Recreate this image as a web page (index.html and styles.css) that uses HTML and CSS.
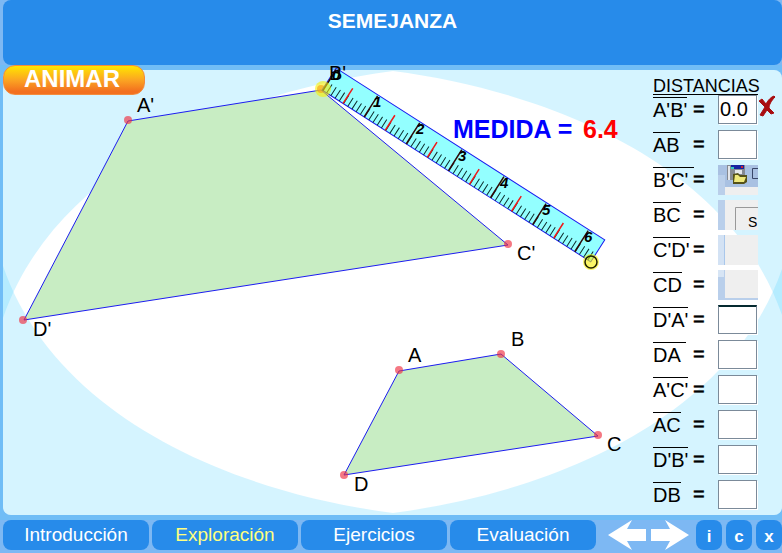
FILE: index.html
```html
<!DOCTYPE html>
<html lang="es">
<head>
<meta charset="utf-8">
<title>Semejanza</title>
<link rel="stylesheet" href="styles.css">
</head>
<body>
<header class="header"><h1>SEMEJANZA</h1></header>
<div class="stage">
<main class="board">
  <svg class="backdrop" viewBox="3 70 779 445" preserveAspectRatio="none" aria-hidden="true">
    <path d="M3 60H782V315C732 170 560 93 393 71C226 93 54 170 3 318Z"/>
    <path d="M3 525H782V269C732 414 560 491 393 513C226 491 54 414 3 266Z"/>
  </svg>
  <svg class="canvas" viewBox="3 70 779 445">
    <g class="shape">
      <path d="M128 121L321 90L508 245L24 320Z"/>
      <path d="M399 371L501 354L598 436L344 475Z"/>
    </g>
    <g class="vertex">
      <circle cx="128" cy="120" r="4"/><circle cx="321" cy="89" r="4"/>
      <circle cx="508" cy="244" r="4"/><circle cx="23" cy="320" r="4"/>
      <circle cx="399" cy="370" r="4"/><circle cx="501" cy="354" r="4"/>
      <circle cx="598" cy="435" r="4"/><circle cx="344" cy="475" r="4"/>
    </g>
    <g transform="translate(322 90) rotate(32.6)">
      <rect class="ruler" x="0" y="-26" width="319" height="26"/>
      <line class="minor" x1="5" y1="-5" x2="318" y2="-5"/>
      <path class="half" d="M25 0V-18M75 0V-18M125 0V-18M175 0V-18M225 0V-18M275 0V-18"/>
      <path class="major" d="M1 0V-25M50 0V-25M100 0V-25M150 0V-25M200 0V-25M250 0V-25M300 0V-25"/>
    </g>
    <g class="names">
      <text x="137" y="112">A'</text><text x="517" y="260">C'</text>
      <text x="33" y="336">D'</text><text x="408" y="362">A</text>
      <text x="511" y="346">B</text><text x="607" y="451">C</text>
      <text x="354" y="491">D</text><text x="329" y="80">B'</text>
    </g>
    <g class="numbers">
      <text x="332" y="80">0</text><text x="373" y="107">1</text>
      <text x="416" y="134">2</text><text x="458" y="161">3</text>
      <text x="500" y="188">4</text><text x="542" y="215">5</text>
      <text x="584" y="242">6</text>
    </g>
    <circle class="grip" cx="323" cy="89" r="8"/>
    <circle class="grip" cx="591" cy="262" r="8"/>
    <circle class="ring" cx="591" cy="262" r="6"/>
    <text class="measure" x="453" y="138">MEDIDA =</text>
    <text class="measure result" x="583" y="138">6.4</text>
  </svg>
  <button class="animate" type="button">ANIMAR</button>
  <form class="distances">
    <h2>DISTANCIAS</h2>
    <div class="row"><label for="d1"><span>A'B'</span></label><b>=</b><input id="d1" value="0.0">
      <svg class="cross" viewBox="0 0 18 22" role="img" aria-label="Incorrecto"><path d="M1 6L4 4L8 9C10 5 13 2 16 1L17 2C13 6 11 10 11 13L16 18L13 19L9 15L5 21L2 20L7 12Z"/></svg></div>
    <div class="row"><label for="d2"><span>AB</span></label><b>=</b><input id="d2"></div>
    <div class="row"><label for="d3"><span>B'C'&nbsp;</span></label><b>=</b><input class="bare" id="d3">
      <svg class="under" viewBox="0 0 40 30" aria-hidden="true">
        <path fill="#a9c1e2" d="M0 0H40V22H0Z"/><path fill="#bacfea" d="M0 10H7V30H0Z"/><path fill="#efefef" d="M7 22H40V30H7Z"/>
        <path fill="#858991" d="M9 0H27V15H9Z"/><path fill="#e4e6ea" d="M10 1H12V15H10ZM17 5H24V9H17Z"/><path fill="#1721a0" d="M13 0H26V4H13Z"/><path fill="#30c8c0" d="M13 2H16V4H13Z"/><path fill="#c23" d="M23 1H25V3H23Z"/>
        <path fill="#555118" d="M15 9L20 8L22 10H29V17L26 19H15Z"/><path fill="#efe87a" d="M17 10H20L22 12H28L26 17H16Z"/>
        <path fill="none" stroke="#394768" d="M40 3.500H34.500V13.500H40"/>
      </svg></div>
    <div class="row"><label for="d4"><span>BC</span></label><b>=</b><input class="bare" id="d4">
      <svg class="under" viewBox="0 0 40 30"><path fill="#efefef" d="M0 0H40V30H0Z"/><path fill="#b9cfeb" d="M0 0H7V30H0Z"/><path fill="none" stroke="#999" d="M17.500 30V7.500H40"/><text x="30" y="27">S</text></svg></div>
    <div class="row"><label for="d5"><span>C'D'</span></label><b>=</b><input class="bare" id="d5">
      <svg class="under" viewBox="0 0 40 30" aria-hidden="true"><path fill="#efefef" d="M0 0H40V30H0Z"/><path fill="#d3e2f4" d="M0 0H6V30H0Z"/><path fill="#a9c7eb" d="M6 0H7V30H6Z"/></svg></div>
    <div class="row"><label for="d6"><span>CD</span></label><b>=</b><input class="bare" id="d6">
      <svg class="under" viewBox="0 0 40 30" aria-hidden="true"><path fill="#efefef" d="M0 0H40V30H0Z"/><path fill="#b9cfeb" d="M0 0H7V28H40V30H0Z"/><path fill="#d7e5f5" d="M0 0H6V7H0Z"/></svg></div>
    <div class="row"><label for="d7"><span>D'A'</span></label><b>=</b><input class="topline" id="d7"></div>
    <div class="row"><label for="d8"><span>DA&nbsp;</span></label><b>=</b><input id="d8"></div>
    <div class="row"><label for="d9"><span>A'C'</span></label><b>=</b><input id="d9"></div>
    <div class="row"><label for="d10"><span>AC</span></label><b>=</b><input id="d10"></div>
    <div class="row"><label for="d11"><span>D'B'</span></label><b>=</b><input id="d11"></div>
    <div class="row"><label for="d12"><span>DB</span></label><b>=</b><input id="d12"></div>
  </form>
</main>
</div>
<nav class="footer">
  <div class="tabs">
    <button type="button">Introducción</button>
    <button type="button" class="current">Exploración</button>
    <button type="button">Ejercicios</button>
    <button type="button">Evaluación</button>
  </div>
  <div class="arrows">
    <button type="button" aria-label="Anterior"><svg viewBox="0 0 38 30"><path d="M0 15L24 0L19 9H38V21H19L24 30Z"/></svg></button>
    <button type="button" aria-label="Siguiente"><svg viewBox="0 0 38 30"><path d="M38 15L14 0L19 9H0V21H19L14 30Z"/></svg></button>
  </div>
  <div class="tools">
    <button type="button">i</button><button type="button">c</button><button type="button">x</button>
  </div>
</nav>
</body>
</html>
```

FILE: styles.css
```css
* { box-sizing: border-box; }

body {
  margin: 0;
  min-height: 100vh;
  display: flex;
  flex-direction: column;
  background: #7db8f3;
  font-family: "Liberation Sans", Arial, sans-serif;
  color: #000;
}

button {
  margin: 0;
  padding: 0;
  border: 0;
  font: inherit;
  cursor: pointer;
}

.header {
  height: 65px;
  margin-left: 3px;
  padding-top: 9px;
  border-radius: 8px;
  background: #278bea;
  text-align: center;
}

h1 {
  margin: 0;
  font-size: 21px;
  line-height: 24px;
  color: #fff;
}

.stage {
  padding: 5px 0 5px 3px;
  background: #70bdf6;
}

.board {
  position: relative;
  display: flex;
  justify-content: flex-end;
  border-radius: 8px;
  background: #fff;
}

.backdrop {
  position: absolute;
  inset: 0;
  width: 100%;
  height: 100%;
  border-radius: 8px;
  fill: #57d4ff;
  fill-opacity: 0.25;
}

.canvas {
  position: absolute;
  inset: 0;
  width: 100%;
  height: 100%;
  overflow: visible;
}

.shape { fill: #c8edc3; stroke: #1c1cf0; }
.vertex { fill: #f03040; fill-opacity: 0.65; }
.names { font-size: 20px; }
.ruler { fill: #80ffff; fill-opacity: 0.85; stroke: #1c1cf0; }
.minor { stroke: #0c2c2c; stroke-width: 10; stroke-dasharray: 1 4; }
.half { stroke: #f01818; stroke-width: 1.5; }
.major { stroke: #300808; stroke-width: 1.5; }
.numbers { font-size: 15px; font-weight: bold; font-style: italic; }
.grip { fill: #f8f000; fill-opacity: 0.6; }
.ring { fill: none; stroke: #202000; stroke-width: 1.5; }
.measure { font-size: 25px; font-weight: bold; fill: #00f; }
.result { fill: #f00; }

.animate {
  position: absolute;
  top: -5px;
  left: 0;
  width: 142px;
  height: 30px;
  padding: 0 4px 3px 0;
  border: 1px solid #f48b3c;
  border-radius: 12px;
  background: linear-gradient(#ffe600, #fba522 50%, #f3701f 90%);
  font-size: 24px;
  line-height: 24px;
  font-weight: bold;
  color: #fff;
}

.distances {
  position: relative;
  width: 129px;
  padding-top: 5px;
}

h2 {
  width: 105px;
  height: 20px;
  margin: 0;
  border-bottom: 1px solid #000;
  font-size: 18px;
  line-height: 22px;
  font-weight: normal;
}

.row {
  display: grid;
  grid-template-columns: 39px 26px 40px 18px;
  height: 35px;
  font-size: 20px;
}

.row label { padding-top: 2px; white-space: nowrap; }

.row span {
  display: inline-block;
  border-top: 1px solid #000;
  line-height: 24px;
}

.row b {
  padding-left: 1px;
  line-height: 28px;
  font-weight: normal;
  -webkit-text-stroke: 0.5px #000;
}

.row input {
  grid-area: 1 / 3;
  width: 39px;
  height: 29px;
  padding: 0 1px;
  border: 1px solid #7b8a99;
  border-radius: 0;
  background: #fff;
  box-shadow: 1px 1px 0 #fff;
  font: inherit;
}

.row .bare {
  z-index: 1;
  width: 40px;
  height: 30px;
  border-color: transparent;
  background: transparent;
  box-shadow: none;
}

.row .topline { border-top: 2px solid #052a30; }

.under { grid-area: 1 / 3; width: 40px; height: 30px; }
.under text { font-size: 14px; }

.cross {
  grid-area: 1 / 4;
  width: 18px;
  height: 22px;
  fill: #a80d10;
  stroke: #a80d10;
}

.footer {
  display: flex;
  justify-content: space-between;
  padding: 0 0 3px 3px;
}

.tabs {
  flex: 0 1 593px;
  display: grid;
  grid-template-columns: repeat(4, 1fr);
  gap: 3px;
}

.tabs button {
  height: 30px;
  border-radius: 8px;
  background: #278bea;
  font-size: 19px;
  color: #fff;
}

.tabs .current { color: #ffff80; }

.arrows { display: flex; gap: 5px; padding-left: 4px; }
.arrows button { width: 38px; height: 30px; background: none; }
.arrows svg { display: block; width: 38px; height: 30px; fill: #fff; }

.tools { display: flex; gap: 4px; }

.tools button {
  width: 26px;
  height: 30px;
  padding-top: 3px;
  border-radius: 8px;
  background: #278bea;
  font-size: 17px;
  font-weight: bold;
  color: #fff;
}
```
